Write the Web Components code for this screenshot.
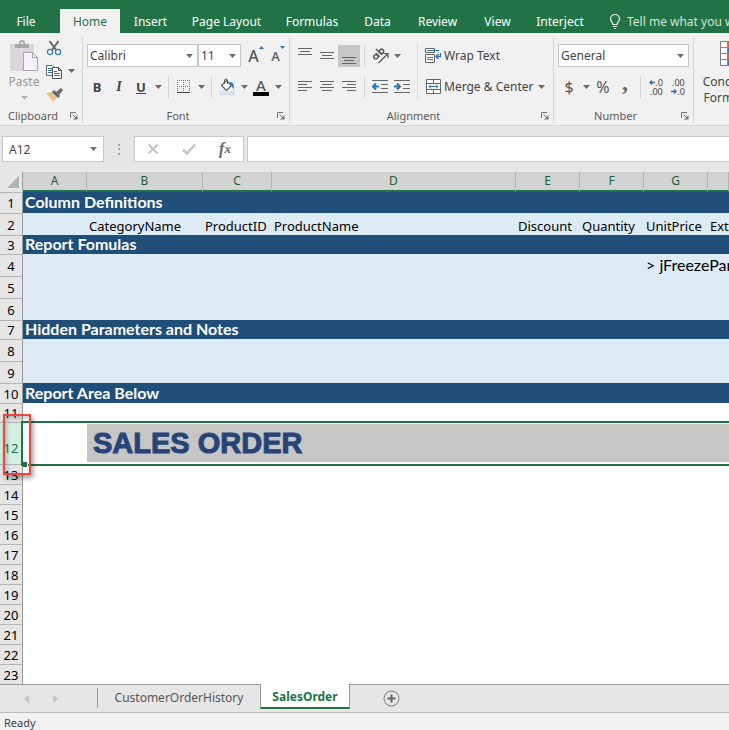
<!DOCTYPE html>
<html lang="en">
<head>
<meta charset="utf-8">
<meta name="viewport" content="width=device-width, initial-scale=1">
<title>SalesOrder - Spreadsheet</title>
<style>
  html, body { margin: 0; min-height: 100vh; }
  body { background: #e6e6e6; overflow: hidden; }
</style>
</head>
<body>
<spread-app></spread-app>

<script>
const ICONS = {
  down: [7, 4, '<path d="M0 0h7L3.5 4z" fill="#6b6b6b"/>'],
  downLight: [7, 4, '<path d="M0 0h7L3.5 4z" fill="#b4b4b4"/>'],
  paste: [30, 32, '<path d="M1 4h24v27H1z" fill="#dbd6dc"/><path d="M6 8V4h4V3q0-3 3-3t3 3v1h4v4z" fill="#a9a8aa"/><rect x="12" y="2" width="2" height="2" fill="#f1f1f1"/><path d="M14.5 12.500h9l5 5v13h-14z" fill="#f7f1fb" stroke="#a5a5a5"/><path d="M23.500 12.500v5h5" fill="none" stroke="#a5a5a5"/>'],
  cut: [16, 16, '<path d="M3.500 1l7 9.500M12.500 1l-7 9.500" stroke="#666" stroke-width="2"/><circle cx="4" cy="12" r="2.600" fill="none" stroke="#3f7fbd" stroke-width="1.300"/><circle cx="12" cy="12" r="2.600" fill="none" stroke="#3f7fbd" stroke-width="1.300"/>'],
  copy: [16, 15, '<path d="M.5 1.500h6l2 2v8h-8z" fill="#fff" stroke="#666"/><path d="M2 4.500h4M2 6.500h4M2 8.500h4" stroke="#2f75b5"/><path d="M6.500 3.500h6l3 3v8h-9z" fill="#fff" stroke="#555"/><path d="M12.500 3.500v3h3" fill="none" stroke="#555"/><path d="M8 7.500h3M8 9.500h6M8 11.500h6" stroke="#2f75b5"/>'],
  painter: [17, 15, '<path d="M0 6l6-1 5 6-4 3.500z" fill="#ecc27e"/><path d="M6 5l2-2 6 6-2 2z" fill="#5c5c5c"/><path d="M10 5l5-4 2 2-4 5z" fill="#666"/>'],
  launcher: [8, 8, '<path d="M.5 6V.5H6" fill="none" stroke="#777"/><path d="M2.500 2.500L6 6" stroke="#777"/><path d="M7.500 3v4.500H3z" fill="#777"/>'],
  growMark: [5, 3, '<path d="M0 3L2.500 0 5 3z" fill="#2f75b5"/>'],
  shrinkMark: [5, 3, '<path d="M0 0h5L2.500 3z" fill="#2f75b5"/>'],
  borders: [14, 14, '<g stroke="#777" stroke-dasharray="1 1"><path d="M0 .5h13M0 6.500h13M.5 0v12M6.500 0v12M12.500 0v12"/></g><path d="M0 12.500h13" stroke="#444"/>'],
  bucket: [16, 17, '<path d="M7.500 2.500l5 5-5 5-5-5z" fill="#fff" stroke="#555" stroke-width="1.200"/><path d="M5.500 6V3q0-2 1.500-2t1.500 2v3" fill="none" stroke="#555"/><path d="M11 4q5 0 3.500 8-.8-4-3.500-5z" fill="#2f75b5"/><path d="M0 13h16v4H0z" fill="#d9dff2"/>'],
  alignTop: [14, 16, '<path d="M0 .5h14M2 3.500h10M0 6.500h14" stroke="#666"/>'],
  alignMiddle: [14, 16, '<path d="M0 4.500h14M2 7.500h10M0 10.500h14" stroke="#666"/>'],
  alignBottom: [14, 16, '<path d="M0 9.500h14M2 12.500h10M0 15.500h14" stroke="#666"/>'],
  left: [14, 11, '<path d="M0 .5h14M0 3.500h9M0 6.500h14M0 9.500h9" stroke="#666"/>'],
  center: [14, 11, '<path d="M0 .5h14M2 3.500h10M0 6.500h14M2 9.500h10" stroke="#666"/>'],
  right: [14, 11, '<path d="M0 .5h14M5 3.500h9M0 6.500h14M5 9.500h9" stroke="#666"/>'],
  orient: [17, 17, '<g fill="none" stroke="#555" stroke-width="1.400" transform="rotate(-45 6 7)"><circle cx="2.500" cy="7.500" r="2.100"/><path d="M5.200 5v5.200M8.200 2v8.200"/><circle cx="10.500" cy="7.500" r="2.100"/></g><path d="M6.500 16l9-9M11.500 6.500h4.500v4.500" fill="none" stroke="#555" stroke-width="1.200"/>'],
  outdent: [17, 14, '<path d="M0 .5h16M9 4.500h7M9 8.500h7M0 12.500h16" stroke="#666"/><path d="M2 6.500h5M4 3.500l-3 3 3 3" fill="none" stroke="#2f75b5" stroke-width="2"/>'],
  indent: [17, 14, '<path d="M0 .5h16M9 4.500h7M9 8.500h7M0 12.500h16" stroke="#666"/><path d="M0 6.500h5M3 3.500l3 3-3 3" fill="none" stroke="#2f75b5" stroke-width="2"/>'],
  wrap: [17, 16, '<path d="M.5 .5h9v4h-9zM.5 6.500h9v8h-9z" fill="#fff" stroke="#666"/><path d="M2 2.500h12M2 9.500h6M2 11.500h6" stroke="#2f75b5"/><path d="M15.500 5v3.500h-4M13.500 6l-2.500 2.500 2.500 2.500" fill="none" stroke="#2f75b5" stroke-width="1.300"/>'],
  merge: [15, 15, '<path d="M.5 .5h14v14H.5zM.5 4.500h14M.5 10.500h14M7.500 .5v4M7.500 10.500v4" fill="#fff" stroke="#666"/><path d="M3 7.500h9M5 5.500l-2 2 2 2M10 5.500l2 2-2 2" fill="none" stroke="#2f75b5"/>'],
  arrowLeft: [6, 5, '<path d="M1 2.500h5M3 .5l-2 2 2 2" fill="none" stroke="#2f75b5" stroke-width="1.400"/>'],
  arrowRight: [6, 5, '<path d="M0 2.500h5M3 .5l2 2-2 2" fill="none" stroke="#2f75b5" stroke-width="1.400"/>'],
  conditional: [30, 25, '<path d="M.5 .5h29v24H.5z" fill="#fff" stroke="#777"/><path d="M8 1h10v6H8zM8 13h12v6H8z" fill="#e2603c"/><path d="M8 7h7v6H8zM8 19h9v5H8z" fill="#3b78c4"/><path d="M0 6.500h30M0 12.500h30M0 18.500h30M7.500 0v25" stroke="#888"/>'],
  bulb: [12, 15, '<path d="M4 10.500c0-2-2.500-3-2.500-5.500a4.500 4.500 0 0 1 9 0c0 2.500-2.500 3.500-2.500 5.500zM4 12.500h4M5 14.500h2" fill="none" stroke="#fff" stroke-width="1.200"/>'],
  cancel: [12, 12, '<path d="M1.500 1.500l9 9M10.500 1.500l-9 9" stroke="#c3c3c3" stroke-width="2"/>'],
  accept: [14, 12, '<path d="M1 6.500l4 4 8-9" fill="none" stroke="#c3c3c3" stroke-width="2.500"/>'],
  dots: [2, 11, '<path d="M0 0h2v2H0zM0 4h2v2H0zM0 9h2v2H0z" fill="#a6a6a6"/>'],
  corner: [12, 12, '<path d="M12 0v12H0z" fill="#b2b2b2"/>'],
  prev: [5, 8, '<path d="M5 0v8L0 4z" fill="#c3c3c3"/>'],
  next: [5, 8, '<path d="M0 0v8l5-4z" fill="#c3c3c3"/>'],
  add: [17, 17, '<circle cx="8.500" cy="8.500" r="7.500" fill="none" stroke="#777"/><path d="M8.500 4.500v8M4.500 8.500h8" stroke="#666" stroke-width="2"/>']
};

/* Registers an element whose shadow root holds the given styles and markup. */
function component(name, css, render) {
  customElements.define(name, class extends HTMLElement {
    connectedCallback() {
      if (this.shadowRoot) return;
      const root = this.attachShadow({ mode: 'open' });
      const body = typeof render === 'function' ? render(this) : render;
      root.innerHTML = `<style>*{box-sizing:border-box}button,select,input{font:inherit;color:inherit;margin:0;border:0;background:none;border-radius:0}${css}</style>${body}`;
    }
  });
}

component('ui-icon', ':host{display:inline-flex;flex:none}svg{display:block}', el => {
  const [w, h, art] = ICONS[el.getAttribute('name')];
  return `<svg width="${w}" height="${h}" viewBox="0 0 ${w} ${h}" aria-hidden="true">${art}</svg>`;
});

component('tool-button', `
  :host{display:inline-flex;flex:none;width:22px;height:22px}
  :host([narrow]){width:12px}
  :host([active]){background:#c6c6c6}
  :host([wide]){width:auto}
  button{flex:1;display:flex;align-items:center;justify-content:center;padding:0}
  :host([wide]) button{justify-content:flex-start}
`, el => `<button type="button" aria-label="${el.getAttribute('label')}"><slot></slot></button>`);

component('combo-box', `
  :host{display:grid;height:23px;background:#fff;border:1px solid #c6c6c6;align-items:center}
  select{grid-area:1/1;appearance:none;width:100%;height:21px;padding:0 16px 0 2px;outline:0}
  ui-icon{grid-area:1/1;justify-self:end;margin-right:4px;pointer-events:none}
`, el => `<select aria-label="${el.getAttribute('label')}"><option>${el.getAttribute('value')}</option></select><ui-icon name="down"></ui-icon>`);

component('ribbon-tab', `
  :host{display:flex;align-items:stretch}
  button{flex:1;padding:0 0 0 2px;color:#fff;white-space:nowrap}
  :host([selected]) button{background:#f1f1f1;color:#217346;padding:0}
  :host([file]) button{padding:0 8px 0 0}
`, el => `<button type="button" role="tab" aria-selected="${el.hasAttribute('selected')}"><slot></slot></button>`);

component('ribbon-tabs', `
  :host{display:grid;grid-template-columns:60px 60px 59px 93px 78px 53px 67px 53px 72px 1fr;height:33px;padding-top:9px;background:#217346;overflow:hidden}
  button{display:flex;align-items:center;gap:6px;padding:0 0 0 14px;color:#d3e3da;white-space:nowrap}
`, `
  <ribbon-tab file>File</ribbon-tab><ribbon-tab selected>Home</ribbon-tab><ribbon-tab>Insert</ribbon-tab>
  <ribbon-tab>Page Layout</ribbon-tab><ribbon-tab>Formulas</ribbon-tab><ribbon-tab>Data</ribbon-tab>
  <ribbon-tab>Review</ribbon-tab><ribbon-tab>View</ribbon-tab><ribbon-tab>Interject</ribbon-tab>
  <button type="button"><ui-icon name="bulb"></ui-icon>Tell me what you want to do</button>`);

component('ribbon-group', `
  :host{display:grid;grid-template-rows:1fr 16px;flex:none;border-right:1px solid #d4d4d4;margin:4px 0 2px}
  .label{display:grid;grid-template-columns:1fr 16px;align-items:center;text-align:center;color:#5c5c5c;font-size:11px}
  .label button{padding:2px 4px 0 0;display:flex;align-items:center;justify-content:flex-end}
`, el => `<slot></slot><div class="label"><span>${el.getAttribute('label')}</span>
  <button type="button" aria-label="${el.getAttribute('label')} settings"><ui-icon name="launcher"></ui-icon></button></div>`);

component('ribbon-bar', `
  :host{display:flex;height:93px;background:#f1f1f1;border-bottom:1px solid #d5d5d5;overflow:hidden;color:#444}
  .row{display:flex;align-items:center;height:23px}
  .stack{display:grid;align-content:start;gap:8px;padding:7px 4px 0 3px}
  i.sep{flex:none;width:1px;height:22px;margin:0 4px;background:#d4d4d4}
  .tall{width:1px;height:55px;margin:6px 4px 0;background:#dcdcdc}
  .clip{width:83px}.font{width:207px}.align{width:264px}.number{width:140px}
  .clipboard{display:flex}
  .paste{display:grid;justify-items:center;align-content:start;width:44px;padding:3px 0 0 4px;color:#999}
  .paste span{line-height:20px}
  .paste ui-icon + span + ui-icon{margin-top:4px}
  .edit{display:grid;grid-template-columns:20px 12px;align-content:start;gap:1px}
  .edit tool-button:not([narrow]){width:20px}
  .combos{display:grid;grid-template-columns:111px 43px 22px 22px;align-items:center;padding-left:1px}
  .combos tool-button{margin-left:4px}
  b,em,u{font-size:13px}
  u{font-weight:700}
  em{font-family:"Liberation Serif",serif;font-weight:700;font-size:14px}
  .size{display:flex;align-items:flex-start;font-weight:500;color:#555}
  .big{font-size:16px;line-height:20px}.small{font-size:13px;line-height:20px}
  .color{display:grid;justify-items:center;font-size:15px;line-height:14px;font-weight:500;color:#555}
  .color::after{content:"";width:16px;height:4px;background:#000}
  .alignment{display:flex}
  .alignment .stack{padding:7px 0 0 4px}
  .alignment .tall + .stack{padding:7px 6px 0 0;flex:1}
  .ic{display:inline-flex;width:22px;justify-content:center}
  .push{margin-left:auto}
  .glyph{font-size:16px;color:#555}.comma{font:700 24px/10px "Liberation Serif",serif;height:20px;color:#666}
  .dec{display:grid;grid-auto-rows:9px;font-size:9px;line-height:9px;justify-items:end}
  .dec span{display:flex;align-items:center}
  .number .stack{padding-left:4px}
  .cond{flex:none;display:grid;justify-items:center;align-content:start;width:82px;padding:8px 0 0;line-height:16px}
  .cond ui-icon{margin-bottom:8px}
`, `
  <ribbon-group class="clip" label="Clipboard"><div class="clipboard">
    <button class="paste" type="button"><ui-icon name="paste"></ui-icon><span>Paste</span><ui-icon name="downLight"></ui-icon></button>
    <div class="edit">
      <tool-button label="Cut"><ui-icon name="cut"></ui-icon></tool-button><span></span>
      <tool-button label="Copy"><ui-icon name="copy"></ui-icon></tool-button><tool-button narrow label="Copy options"><ui-icon name="down"></ui-icon></tool-button>
      <tool-button label="Format Painter"><ui-icon name="painter"></ui-icon></tool-button>
    </div></div>
  </ribbon-group>
  <ribbon-group class="font" label="Font"><div class="stack">
    <div class="combos"><combo-box label="Font name" value="Calibri"></combo-box><combo-box label="Font size" value="11"></combo-box>
      <tool-button label="Increase font size"><span class="size"><span class="big">A</span><ui-icon name="growMark"></ui-icon></span></tool-button>
      <tool-button label="Decrease font size"><span class="size"><span class="small">A</span><ui-icon name="shrinkMark"></ui-icon></span></tool-button></div>
    <div class="row">
      <tool-button label="Bold"><b>B</b></tool-button><tool-button label="Italic"><em>I</em></tool-button><tool-button label="Underline"><u>U</u></tool-button>
      <tool-button narrow label="Underline options"><ui-icon name="down"></ui-icon></tool-button><i class="sep"></i>
      <tool-button label="Borders"><ui-icon name="borders"></ui-icon></tool-button><tool-button narrow label="Border options"><ui-icon name="down"></ui-icon></tool-button><i class="sep"></i>
      <tool-button label="Fill color"><ui-icon name="bucket"></ui-icon></tool-button><tool-button narrow label="Fill options"><ui-icon name="down"></ui-icon></tool-button>
      <tool-button label="Font color"><span class="color">A</span></tool-button><tool-button narrow label="Font color options"><ui-icon name="down"></ui-icon></tool-button>
    </div></div>
  </ribbon-group>
  <ribbon-group class="align" label="Alignment"><div class="alignment">
    <div class="stack">
      <div class="row"><tool-button label="Top align"><ui-icon name="alignTop"></ui-icon></tool-button><tool-button label="Middle align"><ui-icon name="alignMiddle"></ui-icon></tool-button><tool-button active label="Bottom align"><ui-icon name="alignBottom"></ui-icon></tool-button><i class="sep"></i><tool-button label="Orientation"><ui-icon name="orient"></ui-icon></tool-button><tool-button narrow label="Orientation options"><ui-icon name="down"></ui-icon></tool-button></div>
      <div class="row"><tool-button label="Align left"><ui-icon name="left"></ui-icon></tool-button><tool-button label="Center"><ui-icon name="center"></ui-icon></tool-button><tool-button label="Align right"><ui-icon name="right"></ui-icon></tool-button><i class="sep"></i><tool-button label="Decrease indent"><ui-icon name="outdent"></ui-icon></tool-button><tool-button label="Increase indent"><ui-icon name="indent"></ui-icon></tool-button></div>
    </div>
    <div class="tall"></div>
    <div class="stack">
      <div class="row"><tool-button wide label="Wrap Text"><span class="ic"><ui-icon name="wrap"></ui-icon></span><span>Wrap Text</span></tool-button></div>
      <div class="row"><tool-button wide label="Merge &amp; Center"><span class="ic"><ui-icon name="merge"></ui-icon></span><span>Merge &amp; Center</span></tool-button><tool-button class="push" narrow label="Merge options"><ui-icon name="down"></ui-icon></tool-button></div>
    </div></div>
  </ribbon-group>
  <ribbon-group class="number" label="Number"><div class="stack">
    <combo-box label="Number format" value="General"></combo-box>
    <div class="row">
      <tool-button label="Accounting format"><span class="glyph">$</span></tool-button><tool-button narrow label="Accounting options"><ui-icon name="down"></ui-icon></tool-button>
      <tool-button label="Percent style"><span class="glyph">%</span></tool-button><tool-button label="Comma style"><span class="comma">,</span></tool-button><i class="sep"></i>
      <tool-button label="Increase decimal"><span class="dec"><span><ui-icon name="arrowLeft"></ui-icon>.0</span><span>.00</span></span></tool-button>
      <tool-button label="Decrease decimal"><span class="dec"><span>.00</span><span><ui-icon name="arrowRight"></ui-icon>.0</span></span></tool-button>
    </div></div>
  </ribbon-group>
  <button class="cond" type="button"><ui-icon name="conditional"></ui-icon><span>Conditional</span><span>Formatting</span></button>`);

component('formula-bar', `
  :host{display:flex;padding:10px 0 10px 2px;background:#e6e6e6;color:#444}
  .box{display:flex;align-items:center;height:26px;background:#fff;border:1px solid #c9c9c9}
  .name{width:102px}
  .name input{flex:1;min-width:0;padding:0 0 0 6px;outline:0}
  .box button{display:flex;align-items:center;justify-content:center;padding:0}
  .name button{width:20px}
  .dots{width:30px;display:flex;align-items:center;justify-content:center}
  .actions{width:110px}
  .actions button{flex:1;height:100%}
  .actions .fx{font:italic 700 16px "Liberation Serif",serif;color:#666}
  .fx small{font-size:13px}
  .formula{flex:1;margin-left:3px;border-right:0}
  .formula input{flex:1;min-width:0;padding:0 6px;outline:0}
`, `
  <div class="box name"><input aria-label="Name box" value="A12"><button type="button" aria-label="Named ranges"><ui-icon name="down"></ui-icon></button></div>
  <span class="dots"><ui-icon name="dots"></ui-icon></span>
  <div class="box actions"><button type="button" aria-label="Cancel"><ui-icon name="cancel"></ui-icon></button><button type="button" aria-label="Enter"><ui-icon name="accept"></ui-icon></button><button type="button" class="fx" aria-label="Insert function">f<small>x</small></button></div>
  <div class="box formula"><input aria-label="Formula"></div>`);

const ROWS = [
  [1, 21, 'title', ['Column Definitions']],
  [2, 22, 'def', ['', 'CategoryName', 'ProductID', 'ProductName', 'Discount', 'Quantity', 'UnitPrice', 'ExtendedPrice']],
  [3, 19, 'title', ['Report Fomulas']],
  [4, 22, 'def code', ['', '', '', '', '', '', '&gt; jFreezePanes']],
  [5, 22, 'def', []], [6, 22, 'def', []],
  [7, 19, 'title', ['Hidden Parameters and Notes']],
  [8, 22, 'def', []], [9, 22, 'def', []],
  [10, 20, 'title', ['Report Area Below']],
  [11, 19, '', []],
  [12, 42, 'current', ['', 'SALES ORDER']],
  ...Array.from({ length: 11 }, (_, i) => [13 + i, 20, '', []])
];

component('sheet-grid', `
  :host{display:block;overflow:hidden;background:#fff;color:#000}
  table{border-collapse:separate;border-spacing:0;table-layout:fixed;width:100%}
  th,td{padding:0;font-weight:400;white-space:nowrap}
  thead th{height:20px;background:#d3d3d3;color:#1e5c3a;font-size:12px;line-height:16px;border-right:1px solid #b5b5b5;border-bottom:2px solid #217346}
  thead th:first-child{background:#e6e6e6;border-right-color:#999;border-bottom-color:#e6e6e6}
  thead ui-icon{display:flex;justify-content:flex-end;padding:2px 3px 0 0}
  tbody th{background:#e6e6e6;border-right:1px solid #999;border-top:1px solid #b5b5b5;font-size:13px;line-height:16px;text-align:center}
  td{font-size:13px;line-height:16px;vertical-align:bottom;padding:0 0 1px 2px}
  .title td{background:#1f4e79;color:#fff;font:700 16px/18px Lato,sans-serif;vertical-align:middle}
  .def td{background:#ddebf6}
  .code td{font:400 16px/18px Lato,sans-serif;vertical-align:middle}
  .current{position:relative}
  .current th{background:#d4f0e0;color:#217346;padding-top:9px}
  .current td{vertical-align:middle}
  .current td:nth-of-type(n+2){background:#c6c6c6;border-top:2px solid #fff;border-bottom:2px solid #fff}
  .current td:nth-of-type(2){font:700 29px/34px "Liberation Sans",sans-serif;-webkit-text-stroke:1px #264478;color:#264478;padding-left:6px}
  .selection{position:absolute;inset:-1px -2px -2px 21px;border:2px solid #217346}
  .selection::after{content:"";position:absolute;left:0;bottom:-3px;width:4px;height:5px;background:#217346;border-right:1px solid #fff}
  .callout{position:absolute;left:3px;width:28px;top:-8px;bottom:-11px;border:2px solid #e9493f;box-shadow:2px 3px 5px #0006,inset 2px 3px 5px #0003}
`, () => `<table>
  <colgroup><col style="width:23px"><col style="width:64px"><col style="width:116px"><col style="width:69px"><col style="width:244px"><col style="width:64px"><col style="width:64px"><col style="width:64px"><col></colgroup>
  <thead><tr><th><ui-icon name="corner"></ui-icon></th>${[...'ABCDEFG'].map(c => `<th scope="col">${c}</th>`).join('')}<th></th></tr></thead>
  <tbody>${ROWS.map(([n, h, kind, cells]) => `<tr class="${kind}" style="height:${h}px"><th scope="row">${n}${
    n === 12 ? '<span class="selection"></span><span class="callout"></span>' : ''}</th>${
    Array.from({ length: 8 }, (_, i) => `<td>${cells[i] || ''}</td>`).join('')}</tr>`).join('')}</tbody></table>`);

component('sheet-tabs', `
  :host{display:flex;height:29px;background:#e6e6e6;border-bottom:1px solid #bdbdbd;color:#555}
  button{padding:0;white-space:nowrap}
  .nav{display:flex;align-items:center;gap:24px;width:97px;padding-left:24px;border-top:1px solid #999}
  .bar{border-top:1px solid #999;padding:3px 0 4px}
  .bar::after{content:"";display:block;width:1px;height:20px;background:#999}
  .sheet{width:162px;border-top:1px solid #999;padding-bottom:2px}
  .active{width:90px;height:25px;background:#fff;color:#217346;font-weight:700;border:1px solid #999;border-top:0;border-bottom:2px solid #217346;padding-top:2px}
  .add{flex:1;display:flex;align-items:center;border-top:1px solid #999;padding-left:33px}
  .nav button,.add button{display:flex}
`, `
  <div class="nav"><button type="button" aria-label="Previous sheet"><ui-icon name="prev"></ui-icon></button><button type="button" aria-label="Next sheet"><ui-icon name="next"></ui-icon></button></div>
  <span class="bar"></span>
  <button class="sheet" type="button">CustomerOrderHistory</button>
  <button class="active" type="button">SalesOrder</button>
  <div class="add"><button type="button" aria-label="New sheet"><ui-icon name="add"></ui-icon></button></div>`);

component('status-bar', ':host{display:flex;align-items:center;height:17px;padding:2px 4px 0;background:#f1f1f1;color:#444;font-size:11px;line-height:15px}', '<span>Ready</span>');

component('spread-app', ':host{display:flex;flex-direction:column;font:12px "Noto Sans",sans-serif}', `
  <ribbon-tabs></ribbon-tabs><ribbon-bar></ribbon-bar><formula-bar></formula-bar>
  <sheet-grid></sheet-grid><sheet-tabs></sheet-tabs><status-bar></status-bar>`);
</script>
</body>
</html>
